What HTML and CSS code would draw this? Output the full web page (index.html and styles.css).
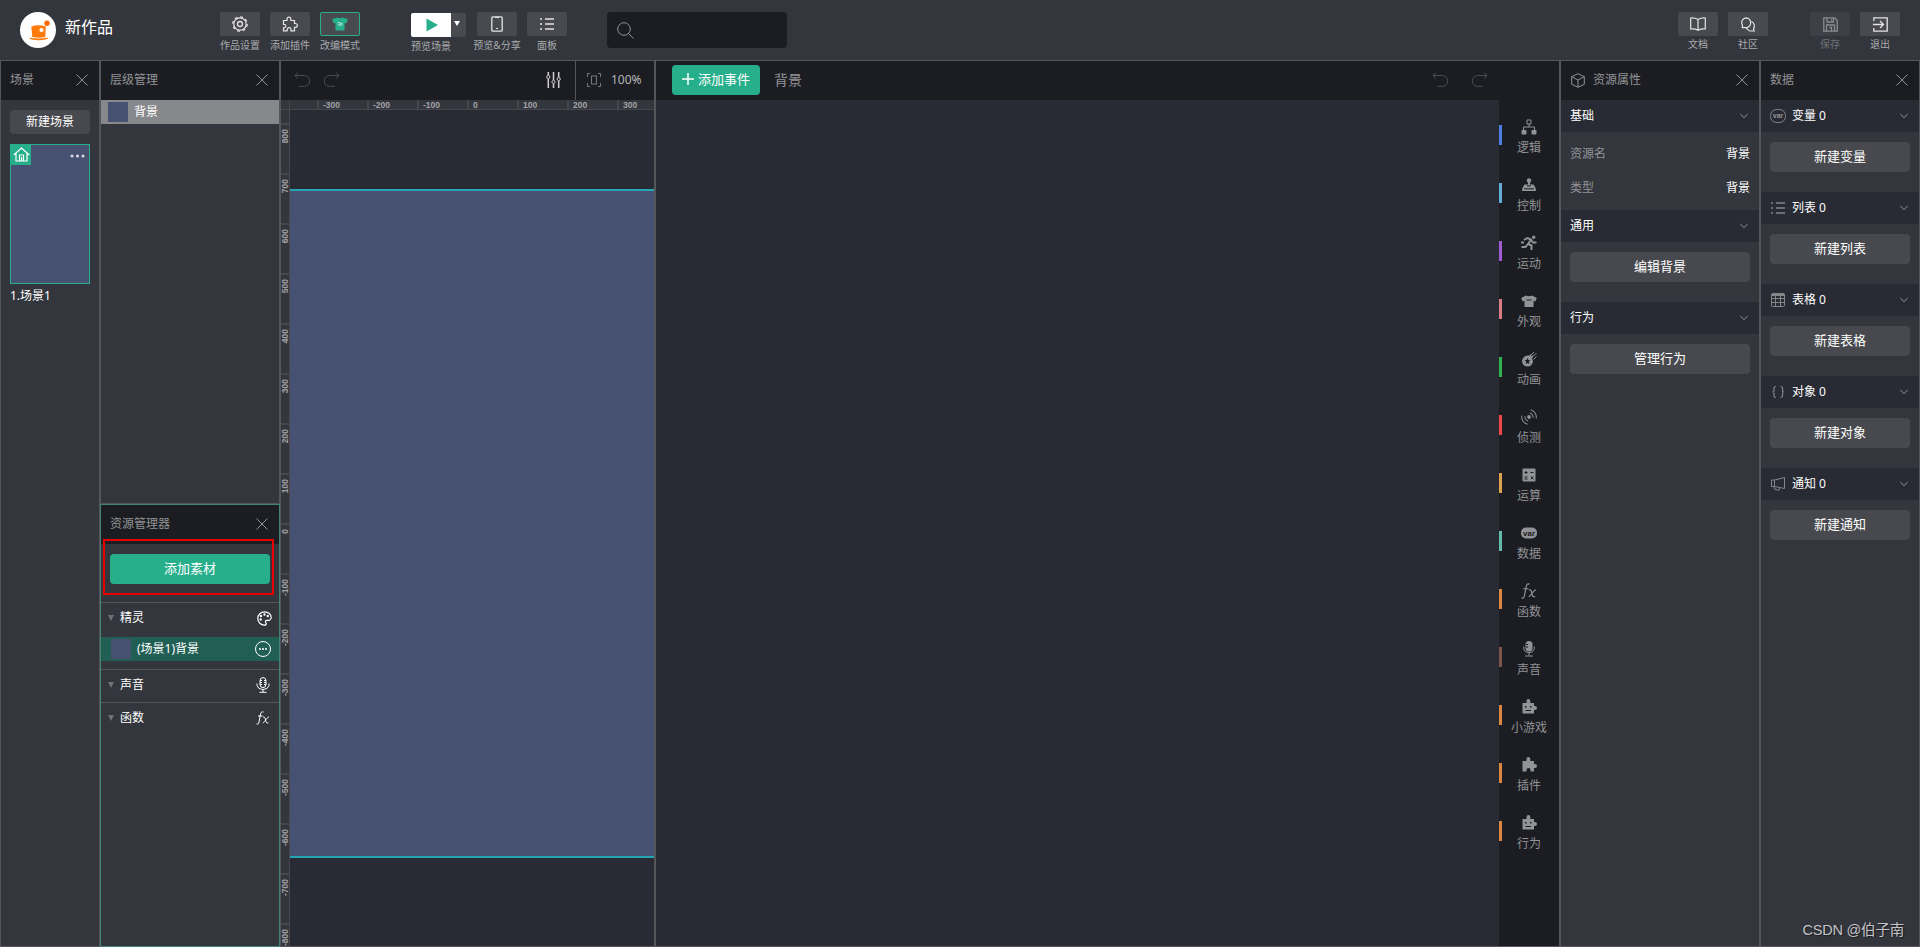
FILE: index.html
```html
<!DOCTYPE html>
<html lang="zh-CN">
<head>
<meta charset="UTF-8">
<meta name="viewport" content="width=device-width, initial-scale=1.0">
<title>新作品</title>
<link rel="stylesheet" href="styles.css">
</head>
<body>
<svg class="sprite">
    <symbol id="i-close" viewBox="0 0 12 12"><path d="M.5.5l11 11M11.5.5l-11 11"/></symbol>
    <symbol id="i-chevron" viewBox="0 0 8 6"><path d="M.3 1L4 4.6 7.7 1"/></symbol>
    <symbol id="i-undo" viewBox="0 0 16 16"><path d="M4 .6L.8 3.500 4 6.400M.8 3.500h9.500a5.400 5.400 0 0 1 0 10.900H5"/></symbol>
    <symbol id="i-redo" viewBox="0 0 16 16"><path d="M12 .6l3.200 2.900L12 6.400M15.200 3.500H5.700a5.400 5.400 0 0 0 0 10.900H11"/></symbol>
    <symbol id="i-list" viewBox="0 0 14 12"><path d="M0 1h2M0 6h2M0 11h2M5 1h9M5 6h9M5 11h9" stroke-width="1.500"/></symbol>
    <symbol id="i-robot" viewBox="0 0 15 15"><path fill-rule="evenodd" d="M.5 4H4.500V2a1.900 1.900 0 0 1 3.800 0V4H12v3h1a2 2 0 0 1 0 4h-1v3.500H.5zM3 7v1.500h1.500V7zM8 7v1.500h1.500V7zM3.500 11v1h5.500v-1z"/></symbol>
    <symbol id="i-fx" viewBox="0 0 14 14"><path d="M7.500 1C5.500.3 4.800 1.500 4.400 4L3 11c-.4 2-1 2.500-2.500 2M2 5h4.500M7 6c1.500-.5 2 .5 2.500 3s1 3.500 3 2.800M13 6c-2 0-4 5-6.200 6"/></symbol>
</svg>

<div class="topbar">
    <div class="logo">
        <svg width="36" height="36" viewBox="0 0 36 36">
            <path d="M11.300 14.500q7-2.500 14.500 0l-.5 10.500q-6 1.500-13 0z" fill="#ff7b0a"/>
            <path d="M9 25.500q9.500 2 19.500 0-1 2.800-9.700 2.800T9 25.500z" fill="#ff7b0a"/>
            <circle cx="21.500" cy="18" r="2.100" fill="#fff"/>
            <circle cx="27" cy="11.300" r="2.700" fill="#ff6a00"/>
        </svg>
    </div>
    <div class="work-name">新作品</div>
    <div class="tools tools-edit">
        <div class="tool">
            <div class="tool-btn"><svg width="16" height="16" viewBox="0 0 16 16"><circle cx="8" cy="8" r="6.200" stroke-width="1.200"/><circle cx="8" cy="8" r="7.200" stroke-dasharray="2.800 2.855" stroke-width="1.300"/><circle cx="8" cy="8" r="2.500" stroke-width="1.300"/></svg></div>
            <span>作品设置</span>
        </div>
        <div class="tool">
            <div class="tool-btn"><svg width="16" height="16" viewBox="0 0 16 16" stroke-width="1.200"><path d="M1.500 4.500H5V3a1.900 1.900 0 0 1 3.800 0v1.500h3.700v3h.9a1.900 1.900 0 0 1 0 3.800h-.9v3.500H9v-1.200a1.900 1.900 0 0 0-3.800 0v1.200H1.500v-3h.6a1.700 1.700 0 0 0 0-3.500h-.6z"/></svg></div>
            <span>添加插件</span>
        </div>
        <div class="tool">
            <div class="tool-btn active"><svg class="fill" width="16" height="14" viewBox="0 0 16 14"><path d="M5 .5q3 1.500 6 0L15.500 2 15 6l-2.500.3V13.500h-9V6.300L1 6 .5 2z"/><path d="M5.500 6q1-1 2.500 0t2.500 0M6 8q1-.8 2 0t2.500-.5" stroke="#fff" stroke-width=".8" fill="none"/></svg></div>
            <span>改编模式</span>
        </div>
    </div>
    <div class="tools tools-run">
        <div class="tool tool-play">
            <div class="play-group">
                <div class="play"><svg width="12" height="14" viewBox="0 0 12 14"><path d="M.5.5L12 7 .5 13.500z"/></svg></div>
                <div class="play-more"><svg width="6" height="5" viewBox="0 0 6 5"><path d="M0 0h6L3 5z"/></svg></div>
            </div>
            <span>预览场景</span>
        </div>
        <div class="tool">
            <div class="tool-btn"><svg width="12" height="16" viewBox="0 0 12 16"><rect x=".8" y=".8" width="10.400" height="14.400" rx="1" stroke-width="1.300"/><path d="M4 1.500h4M5 12.500h2"/></svg></div>
            <span>预览&amp;分享</span>
        </div>
        <div class="tool">
            <div class="tool-btn"><svg width="14" height="12"><use href="#i-list"/></svg></div>
            <span>面板</span>
        </div>
    </div>
    <div class="search"><svg width="17" height="17" viewBox="0 0 17 17"><circle cx="7" cy="7" r="6.300"/><path d="M11.500 11.500l5 5"/></svg></div>
    <div class="tools tools-help">
        <div class="tool">
            <div class="tool-btn"><svg width="16" height="14" viewBox="0 0 16 14" stroke-width="1.200"><path d="M8 2.500Q5 .7.700 1v11Q5 11.700 8 13.300 11 11.700 15.300 12V1Q11 .7 8 2.500v10.800"/></svg></div>
            <span>文档</span>
        </div>
        <div class="tool">
            <div class="tool-btn"><svg width="16" height="15" viewBox="0 0 16 15" stroke-width="1.200"><path d="M6 .8a5 5 0 0 1 1 9.800H2.300l.2-2A5 5 0 0 1 6 .8zM11.500 4.500a4.800 4.800 0 0 1 2 7.200l.7 2.300H10a5 5 0 0 1-3.500-3"/></svg></div>
            <span>社区</span>
        </div>
    </div>
    <div class="tools tools-file">
        <div class="tool disabled">
            <div class="tool-btn"><svg width="15" height="15" viewBox="0 0 15 15" stroke-width="1.300"><path d="M.8.8h11l2.400 2.400v11H.8zM4 1v4h6.500V1M3.500 14V8h8v6M6.500 10.500h2V14M8.500 2v1.500"/></svg></div>
            <span>保存</span>
        </div>
        <div class="tool">
            <div class="tool-btn"><svg width="15" height="15" viewBox="0 0 15 15" stroke-width="1.300"><path d="M.8 4V.8h13.400v13.400H.8V11M0 7.500h10M7 4l3.500 3.500L7 11"/></svg></div>
            <span>退出</span>
        </div>
    </div>
</div>

<div class="main">
    <div class="scenes">
        <div class="panel-head"><span>场景</span><svg class="close"><use href="#i-close"/></svg></div>
        <div class="scenes-body">
            <div class="btn btn-small">新建场景</div>
            <div class="scene">
                <div class="home"><svg width="17" height="15" viewBox="0 0 17 15" stroke-width="1.200"><path d="M.7 8l7.800-7 7.800 7M3 6.500V14h11V6.500M6.500 14V8h4v6M8.500 10v4"/></svg></div>
                <svg class="dots" width="15" height="4" viewBox="0 0 15 4"><circle cx="2" cy="2" r="1.600"/><circle cx="7.500" cy="2" r="1.600"/><circle cx="13" cy="2" r="1.600"/></svg>
            </div>
            <div class="scene-name">1.场景1</div>
        </div>
    </div>

    <div class="left-col">
        <div class="layers">
            <div class="panel-head"><span>层级管理</span><svg class="close"><use href="#i-close"/></svg></div>
            <div class="layer"><div class="thumb"></div>背景</div>
        </div>
        <div class="assets">
            <div class="panel-head"><span>资源管理器</span><svg class="close"><use href="#i-close"/></svg></div>
            <div class="assets-add"><div class="btn btn-green">添加素材</div><div class="mark"></div></div>
            <div class="group group-sprite">
                <div class="group-head"><i></i><span>精灵</span><svg width="15" height="15" viewBox="0 0 15 15" stroke-width="1.200"><path d="M7.500.8c4 0 6.700 2.600 6.700 5.500 0 3.500-2.700 3.200-4.500 3-1.500 0-1.500 1.500-.8 2.500s.3 2.400-1.400 2.400A6.700 6.700 0 0 1 7.500.8z"/><circle cx="4" cy="5" r=".6"/><circle cx="7.500" cy="3.500" r=".6"/><circle cx="10.800" cy="5" r=".6"/><circle cx="3.700" cy="8.500" r=".6"/></svg></div>
                <div class="asset">
                    <div class="thumb"></div><span>(场景1)背景</span>
                    <svg width="16" height="16" viewBox="0 0 16 16"><circle cx="8" cy="8" r="7.500"/><path d="M4 8h2M7 8h2M10 8h2" stroke-width="1.500"/></svg>
                </div>
            </div>
            <div class="group">
                <div class="group-head"><i></i><span>声音</span><svg width="14" height="16" viewBox="0 0 14 16"><rect x="4" y=".6" width="6" height="10" rx="3"/><path d="M1 6.500v2q1 4 6 4t6-4v-2M7 12.500V15M3.500 15.300h7M4 3.500h2M4 5.500h2M4 7.500h2M8 3.500h2M8 5.500h2M8 7.500h2"/></svg></div>
            </div>
            <div class="group">
                <div class="group-head"><i></i><span>函数</span><svg width="14" height="14"><use href="#i-fx"/></svg></div>
            </div>
        </div>
    </div>

    <div class="stage">
        <div class="stage-head">
            <svg width="16" height="16" class="dim"><use href="#i-undo"/></svg>
            <svg width="16" height="16" class="dim"><use href="#i-redo"/></svg>
            <svg class="sliders" width="15" height="16" viewBox="0 0 15 16"><path d="M2.300 0v3M2.300 7v9M7.500 0v8M7.500 12v4M12.700 0v5M12.700 9v7" stroke-width="1.500"/><circle cx="2.300" cy="5" r="1.600"/><circle cx="7.500" cy="10" r="1.600"/><circle cx="12.700" cy="7" r="1.600"/></svg>
            <div class="zoom">
                <svg width="14" height="14" viewBox="0 0 14 14"><path d="M.5 4V.5H3M11 .5h2.500V4M13.500 10v3.500H11M3 13.500H.5V10"/><rect x="4.500" y="3" width="5" height="8"/></svg>
                <span>100%</span>
            </div>
        </div>
        <div class="stage-body">
            <div class="corner"></div>
            <div class="ruler-x"><b>-300</b><b>-200</b><b>-100</b><b>0</b><b>100</b><b>200</b><b>300</b></div>
            <div class="ruler-y"><b><span>800</span></b><b><span>700</span></b><b><span>600</span></b><b><span>500</span></b><b><span>400</span></b><b><span>300</span></b><b><span>200</span></b><b><span>100</span></b><b><span>0</span></b><b><span>-100</span></b><b><span>-200</span></b><b><span>-300</span></b><b><span>-400</span></b><b><span>-500</span></b><b><span>-600</span></b><b><span>-700</span></b><b><span>-800</span></b></div>
            <div class="canvas"><div class="backdrop"></div></div>
        </div>
    </div>

    <div class="events">
        <div class="events-head">
            <div class="btn btn-green add-event"><svg width="12" height="12" viewBox="0 0 12 12"><path d="M6 0v12M0 6h12"/></svg>添加事件</div>
            <span>背景</span>
            <svg width="16" height="16" class="dim first"><use href="#i-undo"/></svg>
            <svg width="16" height="16" class="dim"><use href="#i-redo"/></svg>
        </div>
        <div class="events-body">
            <div class="event-area"></div>
            <div class="cats">
                <div class="cat logic"><svg viewBox="0 0 16 16" class="fill"><path d="M6 1h4v4H6z" fill="none" stroke="#929396"/><path d="M8 5v3M2.500 11V8h11v3" fill="none" stroke="#929396"/><rect y="11" x=".5" width="5" height="4.500" rx="1"/><rect x="10.500" y="11" width="5" height="4.500" rx="1"/></svg>逻辑</div>
                <div class="cat control"><svg viewBox="0 0 16 16" class="fill"><circle cx="8" cy="3.500" r="2.200"/><path d="M7 5h2v2.500h3.500q2.500 3 2.500 6.500H1q0-3.500 2.500-6.500H7z"/><path d="M3 11.800h10M6 8.800h4" stroke="#1c1d22"/></svg>控制</div>
                <div class="cat motion"><svg viewBox="0 0 16 16"><circle cx="12.700" cy="2.200" r="1.700" class="solid"/><path d="M3 5l3.500-2 3.500 1.500-3 4.500 3.500 1.500v4.500M6.500 9.500l-2 2.500H.5M10 5l2 2.500h3.500M0 7.500h3" stroke-width="2"/></svg>运动</div>
                <div class="cat looks"><svg viewBox="0 0 16 16" class="fill"><path d="M5 2.500q3 1.500 6 0L15.800 5l-1.500 3.500-1.800-.7V14h-9V7.800l-1.800.7L.2 5z"/><path d="M5.500 7h5" stroke="#1c1d22"/></svg>外观</div>
                <div class="cat anim"><svg viewBox="0 0 16 16"><path fill-rule="evenodd" class="solid" d="M1 10a6 6 0 0 1 7-5.500L12 2 9.500 5.500 13 4 11 7.500 12 10A5.500 5.500 0 0 1 1 10zm5.500-3L5.600 9l-2 .2 1.500 1.400L4.700 13l1.800-1.100L8.300 13l-.4-2.400 1.500-1.400-2-.2z"/><path d="M10 4l3-3M12.500 5l3-3M12.500 8.500l3-3"/></svg>动画</div>
                <div class="cat detect"><svg viewBox="0 0 16 16"><circle cx="8" cy="8" r="1.900" class="solid"/><path d="M8 4a4 4 0 0 1 4 4M8 .7A7.300 7.300 0 0 1 15.300 8M8 12a4 4 0 0 1-4-4M8 15.300A7.300 7.300 0 0 1 .7 8" transform="rotate(12 8 8)"/></svg>侦测</div>
                <div class="cat math"><svg viewBox="0 0 16 16" class="fill"><rect x="1.500" y="1.500" width="13" height="13" rx="1"/><path d="M3.500 5.500h3M5 4v3M9.500 5.500h3M3.500 10h3M3.500 12h3M9.800 9.500l2.700 2.700M12.500 9.500l-2.700 2.700" stroke="#1c1d22"/></svg>运算</div>
                <div class="cat data"><svg viewBox="0 0 16 16" class="fill"><rect y="2.500" width="16" height="11" rx="5"/><text x="8" y="10.500" text-anchor="middle" class="var-dark">var</text></svg>数据</div>
                <div class="cat func"><svg viewBox="0 0 14 14"><use href="#i-fx"/></svg>函数</div>
                <div class="cat sound"><svg viewBox="0 0 16 16"><rect x="4.500" y="0" width="7" height="10.500" rx="3.500" class="solid"/><path d="M2.800 5.500v2.700q1 3.500 5.200 3.500t5.200-3.500V5.500M8 11.700v3M4 15h8"/><path d="M5 3.500h2M5 6h2" stroke="#1c1d22"/></svg>声音</div>
                <div class="cat game"><svg class="fill" viewBox="0 0 15 15"><use href="#i-robot"/></svg>小游戏</div>
                <div class="cat plugin"><svg viewBox="0 0 15 15" class="fill"><path d="M.5 4h4V2a1.900 1.900 0 0 1 3.800 0V4H12v3h1a2 2 0 0 1 0 4h-1v3.500H8.500V13a2 2 0 0 0-4 0v1.500h-4z"/></svg>插件</div>
                <div class="cat behavior"><svg class="fill" viewBox="0 0 15 15"><use href="#i-robot"/></svg>行为</div>
            </div>
        </div>
    </div>

    <div class="attrs">
        <div class="panel-head"><svg class="cube" width="14" height="15" viewBox="0 0 14 15"><path d="M7 .7l6.300 3v7.600L7 14.300l-6.300-3V3.700zM.7 3.700L7 7l6.300-3.300M7 7v7"/></svg><span>资源属性</span><svg class="close"><use href="#i-close"/></svg></div>
        <div class="section-head"><span>基础</span><svg class="chevron"><use href="#i-chevron"/></svg></div>
        <div class="attr-list">
            <div class="attr"><span>资源名</span><em>背景</em></div>
            <div class="attr"><span>类型</span><em>背景</em></div>
        </div>
        <div class="section-head"><span>通用</span><svg class="chevron"><use href="#i-chevron"/></svg></div>
        <div class="section-body"><div class="btn">编辑背景</div></div>
        <div class="section-head"><span>行为</span><svg class="chevron"><use href="#i-chevron"/></svg></div>
        <div class="section-body"><div class="btn">管理行为</div></div>
    </div>

    <div class="datas">
        <div class="panel-head"><span>数据</span><svg class="close"><use href="#i-close"/></svg></div>
        <div class="section-head"><svg class="kind" viewBox="0 0 16 16"><rect x=".5" y="1.500" width="15" height="13" rx="6"/><text x="8" y="10" text-anchor="middle" class="var-light">var</text></svg><span>变量 0</span><svg class="chevron"><use href="#i-chevron"/></svg></div>
        <div class="section-body"><div class="btn">新建变量</div></div>
        <div class="section-head"><svg class="kind" viewBox="0 0 16 16"><path d="M1 3h2M1 8h2M1 13h2M6 3h9M6 8h9M6 13h9" stroke-width="1.300"/></svg><span>列表 0</span><svg class="chevron"><use href="#i-chevron"/></svg></div>
        <div class="section-body"><div class="btn">新建列表</div></div>
        <div class="section-head"><svg class="kind" viewBox="0 0 16 16"><rect x="1.500" y="1.500" width="13" height="13" rx="1"/><path d="M1.500 3h13" stroke-width="2"/><path d="M1 6.500h14M1 10.500h14M5.500 4v11M10.500 4v11"/></svg><span>表格 0</span><svg class="chevron"><use href="#i-chevron"/></svg></div>
        <div class="section-body"><div class="btn">新建表格</div></div>
        <div class="section-head"><svg class="kind" viewBox="0 0 16 16" stroke-width="1.200"><path d="M6 2.500Q4 2.500 4 4v2.500Q4 8 2.500 8 4 8 4 9.500V12q0 1.500 2 1.500M10.500 2.500q2 0 2 1.500v2.500q0 1.500 1.500 1.500-1.500 0-1.500 1.500V12q0 1.500-2 1.500"/></svg><span>对象 0</span><svg class="chevron"><use href="#i-chevron"/></svg></div>
        <div class="section-body"><div class="btn">新建对象</div></div>
        <div class="section-head"><svg class="kind" viewBox="0 0 16 16"><path d="M4.500 4l10-2.500v11l-10-2zM4.500 4h-3v6.500h3M4 11l1 2.500 4 .8.500-2.300"/></svg><span>通知 0</span><svg class="chevron"><use href="#i-chevron"/></svg></div>
        <div class="section-body"><div class="btn">新建通知</div></div>
    </div>
</div>
<div class="credit">CSDN @伯子南</div>
</body>
</html>
```
FILE: styles.css
```css
* {
    box-sizing: border-box;
}
body {
    margin: 0;
    height: 947px;
    overflow: hidden;
    display: flex;
    flex-direction: column;
    background-color: #33363d;
    color: #fff;
    font-family: "Noto Sans", "Noto Sans CJK SC", sans-serif;
    font-size: 12px;
    line-height: 16px;
}
svg {
    display: block;
    flex: none;
    fill: none;
    stroke: currentColor;
}
svg.fill, .solid {
    fill: currentColor;
    stroke: none;
}
.sprite {
    position: absolute;
    width: 0;
    height: 0;
}

/* top bar */
.topbar {
    flex: none;
    height: 61px;
    padding: 12px 20px 0;
    display: flex;
    align-items: flex-start;
    border-bottom: 1px solid #55565a;
}
.logo {
    width: 36px;
    height: 36px;
    border-radius: 50%;
    background-color: #fff;
}
.logo svg {
    stroke: none;
}
.work-name {
    width: 154px;
    padding-left: 9px;
    font-size: 16px;
    line-height: 30px;
}
.tools {
    display: flex;
    gap: 10px;
}
.tools-edit {
    margin: 0 51px 0 0;
    padding-left: 10px;
}
.tool {
    width: 40px;
    display: flex;
    flex-direction: column;
    align-items: center;
    gap: 2px;
    color: #e4e4e5;
}
.tool span {
    font-size: 10px;
    line-height: 14px;
    color: #aaabad;
    white-space: nowrap;
}
.tool-btn {
    width: 40px;
    height: 24px;
    border-radius: 2px;
    background-color: #484a4f;
    display: flex;
    align-items: center;
    justify-content: center;
}
.tool-btn.active {
    border: 1px solid #27ae8b;
    color: #27ae8b;
}
.tool.tool-play {
    width: 56px;
    padding-top: 1px;
    align-items: flex-start;
}
.play-group {
    display: flex;
}
.play {
    width: 40px;
    height: 24px;
    padding-left: 2px;
    border-radius: 2px 0 0 2px;
    background-color: #fff;
    display: flex;
    align-items: center;
    justify-content: center;
}
.play svg {
    fill: #27ae8b;
    stroke: none;
}
.play-more {
    width: 15px;
    height: 24px;
    padding: 8px 0 0 3px;
    border-radius: 0 2px 2px 0;
    background-color: #484a4f;
}
.play-more svg {
    fill: #fff;
    stroke: none;
}
.search {
    width: 180px;
    height: 36px;
    margin-left: 40px;
    padding: 10px;
    border-radius: 4px;
    background-color: #1c1d22;
    color: #929396;
}
.tools-help {
    margin-left: auto;
}
.tools-file {
    margin-left: 42px;
}
.tools-help .tool, .tools-file .tool {
    gap: 1px;
}
.disabled {
    opacity: 0.5;
}

/* panels */
.main {
    flex: 1;
    min-height: 0;
    display: flex;
    gap: 2px;
    padding: 0 1px 1px;
    background-color: #55565a;
}
.panel-head {
    flex: none;
    height: 39px;
    padding: 0 11px 1px 9px;
    display: flex;
    align-items: center;
    background-color: #1c1d22;
    color: #929396;
}
.close {
    width: 12px;
    height: 12px;
    margin-left: auto;
}
.btn {
    height: 30px;
    padding-bottom: 2px;
    border-radius: 4px;
    background-color: #48494e;
    font-size: 13px;
    display: flex;
    align-items: center;
    justify-content: center;
}
.btn-small {
    height: 24px;
    padding-bottom: 1px;
    font-size: 12px;
}
.btn-green {
    background-color: #27ae8b;
}
.thumb {
    width: 20px;
    height: 20px;
    background-color: #475172;
}

.scenes {
    width: 98px;
    background-color: #33363d;
}
.scenes-body {
    padding: 10px 9px;
}
.scene {
    height: 140px;
    margin: 10px 0 4px;
    border: 1px solid #27ae8b;
    background-color: #475172;
    display: flex;
    justify-content: space-between;
}
.home {
    width: 20px;
    height: 20px;
    padding: 2px 0 0 2px;
    background-color: #27ae8b;
}
.dots {
    margin: 9px 4px 0 0;
    fill: #d5d7de;
    stroke: none;
}

.left-col {
    width: 178px;
    display: flex;
    flex-direction: column;
}
.layers {
    height: 442px;
    margin-bottom: 1px;
    background-color: #33363d;
}
.layer {
    height: 24px;
    padding-left: 7px;
    display: flex;
    align-items: center;
    gap: 6px;
    background-color: #87888b;
}
.assets {
    flex: 1;
    margin: 0 -1px -1px;
    border: 1px solid #44836f;
    background-color: #33363d;
}
.assets-add {
    position: relative;
    height: 58px;
    padding: 10px 9px 0;
}
/* highlight frame lies over the header and the button */
.mark {
    position: absolute;
    left: 2px;
    top: -5px;
    width: 171px;
    height: 56px;
    border: 2px solid #e80000;
}
.group {
    height: 33px;
    border-top: 1px solid #55565a;
}
.group-sprite {
    height: 67px;
}
.group-head {
    height: 32px;
    padding: 0 7px 2px;
    display: flex;
    align-items: center;
}
.group-head i {
    width: 12px;
    height: 6px;
    background-color: #707277;
    clip-path: polygon(0 0, 6px 0, 3px 6px);
}
.group-head svg {
    margin-left: auto;
}
.group:not(.group-sprite) svg {
    margin-right: 2px;
}
.asset {
    height: 24px;
    margin-top: 2px;
    padding: 0 8px 0 10px;
    display: flex;
    align-items: center;
    gap: 6px;
    background-color: #215f54;
}
.asset svg {
    margin-left: auto;
}

/* stage */
.stage {
    width: 373px;
    display: flex;
    flex-direction: column;
}
.stage-head {
    height: 39px;
    padding-left: 13px;
    display: flex;
    align-items: center;
    gap: 14px;
    background-color: #1c1d22;
}
.stage-head > svg {
    margin-bottom: 1px;
}
.dim {
    color: #4b4c50;
}
.stage-head .sliders {
    margin-left: auto;
    color: #d0d0d2;
}
.zoom {
    width: 79px;
    height: 39px;
    padding: 0 0 2px 11px;
    border-left: 1px solid #55565a;
    display: flex;
    align-items: center;
    gap: 10px;
    color: #77787c;
}
.zoom span {
    color: #b5b6b8;
}
.stage-body {
    flex: 1;
    min-height: 0;
    display: grid;
    grid-template-columns: 9px 1fr;
    grid-template-rows: 10px 1fr;
    font-family: "Liberation Sans", Arial, sans-serif;
    font-size: 8.5px;
    line-height: 9px;
    color: #a3a4a7;
}
.corner, .ruler-x, .ruler-y {
    min-width: 0;
    min-height: 0;
    overflow: hidden;
    display: flex;
    background-color: #33363d;
}
.corner {
    border-right: 1px solid #45474d;
    border-bottom: 1px solid #45474d;
}
.ruler-x {
    padding-left: 27px;
    border-bottom: 1px solid #45474d;
}
.ruler-x b {
    flex: none;
    width: 50px;
    height: 9px;
    padding: 1px 0 0 4px;
    border-left: 2px solid #45474d;
}
.ruler-y {
    flex-direction: column;
    padding-top: 13px;
    border-right: 1px solid #45474d;
}
.ruler-y b {
    flex: none;
    height: 50px;
    padding-top: 4px;
    border-top: 2px solid #45474d;
}
.ruler-y span {
    display: block;
    writing-mode: vertical-rl;
    transform: rotate(180deg);
    width: 9px;
    height: fit-content;
}
.canvas {
    background-color: #282b33;
    padding-top: 79px;
}
.backdrop {
    height: 669px;
    border: solid #26a6b2;
    border-width: 2px 0;
    background-color: #475172;
}

/* events */
.events {
    flex: 1;
    display: flex;
    flex-direction: column;
}
.events-head {
    height: 39px;
    padding: 0 71px 1px 16px;
    display: flex;
    align-items: center;
    background-color: #1c1d22;
    color: #929396;
    font-size: 14px;
}
.events-head span {
    padding-bottom: 1px;
}
.add-event {
    width: 88px;
    margin-right: 14px;
    gap: 4px;
    color: #fff;
}
.add-event svg {
    stroke-width: 1.5;
}
.first {
    margin: 0 24px 0 auto;
}
.events-body {
    flex: 1;
    display: flex;
}
.event-area {
    flex: 1;
    background-color: #282b33;
}
.cats {
    width: 60px;
    padding-top: 18px;
    background-color: #1c1d22;
}
.cat {
    height: 58px;
    padding-top: 1px;
    display: flex;
    flex-direction: column;
    align-items: center;
    gap: 5px;
    color: #929396;
    background: linear-gradient(var(--bar), var(--bar)) no-repeat 0 7px / 3px 20px;
}
.cat svg {
    width: 16px;
    height: 16px;
}
.cat.game svg, .cat.plugin svg, .cat.behavior svg {
    width: 15px;
    height: 15px;
    margin-bottom: 1px;
}
.logic { --bar: #4f7fe0; }
.control { --bar: #62aed8; }
.motion { --bar: #9f5bd2; }
.looks { --bar: #dd7b82; }
.anim { --bar: #2fb350; }
.detect { --bar: #ee4848; }
.math { --bar: #dda24d; }
.data { --bar: #62bba8; }
.func, .game, .plugin, .behavior { --bar: #dc8641; }
.sound { --bar: #7b5548; }
.var-dark, .var-light {
    font: bold 8px "Liberation Sans", Arial, sans-serif;
    fill: #1c1d22;
    stroke: none;
}
.var-light {
    font-size: 7px;
    fill: #929396;
}

/* attributes and data */
.attrs {
    width: 198px;
    background-color: #33363d;
}
.datas {
    width: 158px;
    background-color: #33363d;
}
.cube {
    margin: 0 8px 0 1px;
}
.section-head {
    height: 32px;
    padding: 0 11px 0 9px;
    display: flex;
    align-items: center;
    background-color: #282b33;
}
.chevron {
    width: 8px;
    height: 6px;
    margin-left: auto;
    color: #929396;
}
.kind {
    width: 16px;
    height: 16px;
    margin-right: 6px;
    color: #85868a;
}
.section-body {
    height: 60px;
    padding: 10px 9px 0;
}
.attr-list {
    height: 78px;
    padding: 5px 9px 0;
}
.attr {
    height: 34px;
    display: flex;
    align-items: center;
    justify-content: space-between;
}
.attr span {
    color: #929396;
}
.attr em {
    font-style: normal;
}
.credit {
    position: absolute;
    right: 16px;
    bottom: 7px;
    font-family: "Liberation Sans", "Noto Sans CJK SC", sans-serif;
    font-size: 14.5px;
    line-height: 20px;
    letter-spacing: -0.2px;
    color: #c4c4c6;
    text-shadow: 1px 1px 1px #1c1d22;
}
```
